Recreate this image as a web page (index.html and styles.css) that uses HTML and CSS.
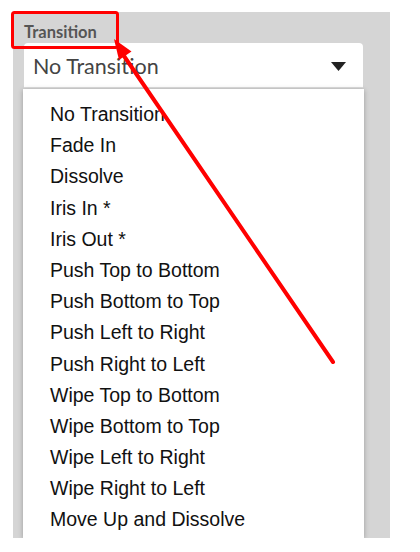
FILE: index.html
```html
<!DOCTYPE html>
<html>
<head>
<meta charset="utf-8">
<link rel="stylesheet" href="styles.css">
</head>
<body>
<div class="panel">
  <div class="label">Transition</div>
  <div class="select">
    <span class="value">No Transition</span>
    <svg class="caret" width="15" height="9" viewBox="0 0 15 9"><polygon points="0,0 15,0 7.5,9" fill="#222"/></svg>
  </div>
  <ul class="list">
    <li>No Transition</li>
    <li>Fade In</li>
    <li>Dissolve</li>
    <li>Iris In *</li>
    <li>Iris Out *</li>
    <li>Push Top to Bottom</li>
    <li>Push Bottom to Top</li>
    <li>Push Left to Right</li>
    <li>Push Right to Left</li>
    <li>Wipe Top to Bottom</li>
    <li>Wipe Bottom to Top</li>
    <li>Wipe Left to Right</li>
    <li>Wipe Right to Left</li>
    <li>Move Up and Dissolve</li>
  </ul>
</div>
<svg class="annot" width="420" height="552" viewBox="0 0 420 552">
  <rect x="12.5" y="12.5" width="105" height="35" rx="2" fill="none" stroke="#ff0000" stroke-width="3"/>
  <line x1="333" y1="362" x2="124" y2="56" stroke="#ff0000" stroke-width="4" stroke-linecap="round"/>
  <polygon points="114,39 131.5,51.5 119,60" fill="#ff0000"/>
</svg>
</body>
</html>
```
FILE: styles.css
```css
html, body {
  margin: 0;
  padding: 0;
  background: #ffffff;
}
body {
  width: 420px;
  height: 552px;
  position: relative;
  overflow: hidden;
}
.panel {
  margin: 12px 0 0 13px;
  width: 377px;
  height: 526px;
  background: #d5d5d5;
  overflow: hidden;
  display: flex;
  flex-direction: column;
}
.label {
  font-family: Lato, "Open Sans", sans-serif;
  font-weight: 700;
  font-size: 16.5px;
  color: #555555;
  height: 31px;
  line-height: 20px;
  padding: 10px 0 0 11px;
  box-sizing: border-box;
}
.select {
  margin-left: 11px;
  width: 339px;
  height: 45px;
  flex: none;
  background: #ffffff;
  border-radius: 4px 4px 0 0;
  border-bottom: 1px solid #dedede;
  box-sizing: border-box;
  display: flex;
  align-items: center;
  justify-content: space-between;
  padding: 2px 17px 0 9px;
}
.value {
  font-family: Lato, "Open Sans", sans-serif;
  font-size: 21.5px;
  color: #444444;
  line-height: 24px;
}
.caret {
  display: block;
}
.list {
  list-style: none;
  margin: 1px 0 0 10px;
  padding: 10px 0 0 0;
  width: 341px;
  flex: 1;
  background: #ffffff;
  box-shadow: 0 1px 5px rgba(0, 0, 0, 0.28);
}
.list li {
  font-family: "Liberation Sans", Arial, sans-serif;
  font-size: 19.5px;
  color: #111111;
  line-height: 31.2px;
  height: 31.2px;
  padding-left: 27px;
}
.annot {
  position: absolute;
  left: 0;
  top: 0;
  pointer-events: none;
}
```
